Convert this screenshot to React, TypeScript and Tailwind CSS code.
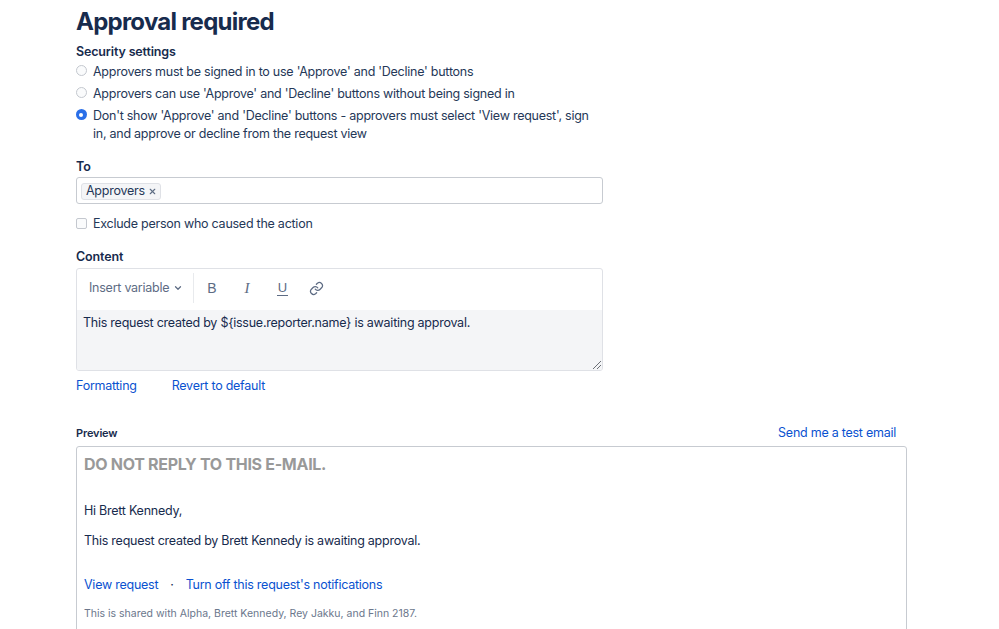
import { ChevronDown, X } from 'lucide-react';

const Radio = ({ checked, children }: { checked?: boolean; children: React.ReactNode }) => {
  return (
    <div className="flex items-start gap-[6.5px]">
      {checked ? (
        <span className="-ml-[0.5px] mt-[2px] flex h-[11px] w-[11px] shrink-0 items-center justify-center rounded-full bg-[#2a6fe8]">
          <span className="h-[4px] w-[4px] rounded-full bg-white" />
        </span>
      ) : (
        <span className="-ml-[0.5px] mt-[2px] h-[11px] w-[11px] shrink-0 rounded-full border border-[#c4c8cf] bg-[#fafbfc]" />
      )}
      <span className="w-[503px] text-[12.5px] leading-[18px] tracking-[-0.25px] text-[#253858]">{children}</span>
    </div>
  );
};

const Toolbar = () => {
  return (
    <div className="flex h-[41px] items-center pb-[3px] text-[#5e6c84]">
      <div className="flex h-[30px] w-[117px] items-center border-r border-[#e8eaed] pl-[12px]">
        <span className="text-[12.5px] tracking-[-0.25px]">Insert variable</span>
        <ChevronDown size={10} strokeWidth={3} className="ml-[4px]" />
      </div>
      <span className="ml-[13px] w-[10px] text-center font-['Liberation_Sans',sans-serif] text-[14px]">B</span>
      <span className="ml-[25px] w-[10px] text-center font-['Liberation_Serif',serif] text-[15px] italic">I</span>
      <span className="ml-[25px] w-[11px] border-b border-[#5e6c84] text-center font-['Liberation_Sans',sans-serif] text-[13px] leading-[14px]">U</span>
      <svg viewBox="0 0 24 24" width="15" height="15" fill="none" stroke="currentColor" strokeWidth="2" strokeLinecap="round" strokeLinejoin="round" className="ml-[21px]">
        <path d="M10 13a5 5 0 0 0 7.5.5l3-3a5 5 0 0 0-7-7l-1.7 1.7" />
        <path d="M14 11a5 5 0 0 0-7.5-.5l-3 3a5 5 0 0 0 7 7l1.7-1.7" />
      </svg>
    </div>
  );
};

const App = () => {
  return (
    <div className="h-[629px] overflow-hidden bg-white pl-[76px] font-['Inter',sans-serif] text-[#172b4d]">
      <h1 className="pt-[6px] text-[24px] font-bold leading-[32px] tracking-[-0.75px] text-[#172b4d]">Approval required</h1>

      <h2 className="mt-[4px] text-[12.5px] font-semibold leading-[20px] tracking-[-0.15px]">Security settings</h2>
      <div className="mt-[1px] flex flex-col gap-[4px]">
        <Radio>Approvers must be signed in to use 'Approve' and 'Decline' buttons</Radio>
        <Radio>Approvers can use 'Approve' and 'Decline' buttons without being signed in</Radio>
        <Radio checked>
          Don't show 'Approve' and 'Decline' buttons - approvers must select 'View request', sign in, and approve or decline from the request view
        </Radio>
      </div>

      <h2 className="mt-[14px] text-[12.5px] font-semibold leading-[20px] tracking-[-0.15px]">To</h2>
      <div className="flex h-[27px] w-[527px] items-center rounded-[3px] border border-[#c7cbd1] pl-[4px] pt-[1px]">
        <span className="flex h-[17px] items-center gap-[3px] rounded-[3px] border border-[#dfe1e6] bg-[#f4f5f7] pl-[4px] pr-[3px] text-[12.5px] tracking-[-0.25px] text-[#253858]">
          Approvers
          <X size={9} strokeWidth={3} className="text-[#5e6c84]" />
        </span>
      </div>

      <div className="mt-[10px] flex items-start gap-[6px]">
        <span className="mt-[4px] h-[11px] w-[11px] rounded-[2px] border border-[#c4c8cf] bg-[#fafbfc]" />
        <span className="text-[12.5px] leading-[20px] tracking-[-0.25px] text-[#253858]">Exclude person who caused the action</span>
      </div>

      <h2 className="mt-[13px] text-[12.5px] font-semibold leading-[20px] tracking-[-0.15px]">Content</h2>
      <div className="relative mt-[1px] w-[527px] overflow-hidden rounded-[3px] border border-[#dfe1e6]">
        <Toolbar />
        <div className="h-[60px] bg-[#f4f5f7] px-[6px] pt-[3px] text-[12.5px] leading-[19px] tracking-[-0.25px] text-[#172b4d]">
          This request created by {'${issue.reporter.name}'} is awaiting approval.
        </div>
        <svg viewBox="0 0 8 8" width="8" height="8" className="absolute bottom-[1px] right-[1px]" stroke="#6b6f76" strokeWidth="1">
          <path d="M0 8 8 0M4 8l4-4" />
        </svg>
      </div>

      <div className="mt-[5px] flex gap-[35px] text-[12.5px] leading-[20px] tracking-[-0.25px] text-[#0a52d0]">
        <a>Formatting</a>
        <a>Revert to default</a>
      </div>

      <div className="mt-[27px] flex w-[820px] items-end justify-between">
        <h3 className="text-[11px] font-semibold leading-[20px] tracking-[-0.15px]">Preview</h3>
        <a className="text-[12.5px] leading-[20px] tracking-[-0.25px] text-[#0a52d0]">Send me a test email</a>
      </div>
      <div className="mt-[3px] h-[300px] w-[831px] rounded-[3px] border border-[#c7cbd1] px-[7px]">
        <p className="mt-[6px] text-[16px] font-bold leading-[22px] tracking-[-0.3px] text-[#999999]">DO NOT REPLY TO THIS E-MAIL.</p>
        <p className="mt-[26px] text-[12.5px] leading-[20px] tracking-[-0.25px]">Hi Brett Kennedy,</p>
        <p className="mt-[10px] text-[12.5px] leading-[20px] tracking-[-0.25px]">This request created by Brett Kennedy is awaiting approval.</p>
        <div className="mt-[24px] flex text-[12.5px] leading-[20px] tracking-[-0.25px]">
          <a className="text-[#0a52d0]">View request</a>
          <span className="mx-[12px] text-[#172b4d]">·</span>
          <a className="text-[#0a52d0]">Turn off this request's notifications</a>
        </div>
        <p className="mt-[9px] text-[10.5px] leading-[20px] text-[#6b778c]">This is shared with Alpha, Brett Kennedy, Rey Jakku, and Finn 2187.</p>
      </div>
    </div>
  );
};

export default App;
